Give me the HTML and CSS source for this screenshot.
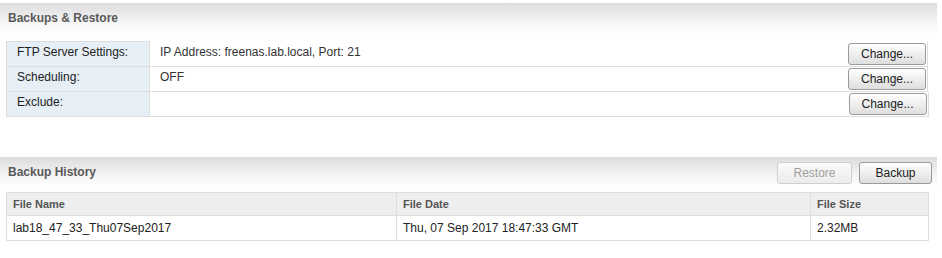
FILE: index.html
```html
<!DOCTYPE html>
<html lang="en">
<head>
    <meta charset="UTF-8">
    <title>Backups & Restore</title>
    <link rel="stylesheet" href="styles.css">
</head>
<body>
    <div class="section">
        <div class="section-header">
            <span class="section-title">Backups &amp; Restore</span>
        </div>
        <table class="settings">
            <tr>
                <td class="label">FTP Server Settings:</td>
                <td class="value"><span>IP Address: freenas.lab.local, Port: 21</span><button type="button" class="btn">Change...</button></td>
            </tr>
            <tr>
                <td class="label">Scheduling:</td>
                <td class="value"><span>OFF</span><button type="button" class="btn">Change...</button></td>
            </tr>
            <tr>
                <td class="label">Exclude:</td>
                <td class="value"><span></span><button type="button" class="btn">Change...</button></td>
            </tr>
        </table>
    </div>
    <div class="section history">
        <div class="section-header">
            <span class="section-title">Backup History</span>
            <div class="actions">
                <button type="button" class="btn" disabled>Restore</button>
                <button type="button" class="btn">Backup</button>
            </div>
        </div>
        <table class="grid">
            <tr>
                <th class="col-name">File Name</th>
                <th class="col-date">File Date</th>
                <th>File Size</th>
            </tr>
            <tr>
                <td>lab18_47_33_Thu07Sep2017</td>
                <td>Thu, 07 Sep 2017 18:47:33 GMT</td>
                <td>2.32MB</td>
            </tr>
        </table>
    </div>
</body>
</html>
```

FILE: styles.css
```css
body {
    margin: 0;
    font-family: "Liberation Sans", Arial, sans-serif;
    font-size: 12px;
    color: #222;
    background-color: #ffffff;
}
.section {
    padding-top: 3px;
}
.section.history {
    padding-top: 40px;
}
.section-header {
    display: flex;
    justify-content: space-between;
    align-items: center;
    width: 937px;
    height: 30px;
    box-sizing: border-box;
    padding: 0 5px 0 8px;
    background: linear-gradient(#dcdcdc, #f4f4f4 60%, #ffffff);
}
.section-title {
    font-size: 12px;
    font-weight: bold;
    color: #5a5a5a;
}
.actions {
    display: flex;
    gap: 7px;
    margin-top: 1px;
}
.btn {
    font-family: "Liberation Sans", Arial, sans-serif;
    font-size: 12px;
    color: #222;
    height: 22px;
    padding: 0 10px;
    border: 1px solid #9a9a9a;
    border-radius: 3px;
    background: linear-gradient(#ffffff, #dedede);
}
.btn:disabled {
    color: #a0a0a0;
    border-color: #cfcfcf;
    background: linear-gradient(#fafafa, #ececec);
}
.actions .btn {
    width: 73px;
    height: 22px;
}
.actions .btn:disabled {
    width: 75px;
}
table {
    border-collapse: collapse;
    margin-left: 6px;
    width: 923px;
}
.settings {
    margin-top: 8px;
}
.settings td {
    height: 24px;
    padding: 0;
    border: 1px solid #dddddd;
}
.settings td.label {
    width: 132px;
    padding-left: 10px;
    background-color: #e6eef6;
    vertical-align: top;
    padding-top: 3px;
    height: 21px;
}
.value {
    display: flex;
    justify-content: space-between;
    align-items: center;
    box-sizing: border-box;
    padding: 0 1px 0 10px !important;
    border: none !important;
    border-bottom: 1px solid #dddddd !important;
    border-right: 1px solid #dddddd !important;
    height: 25px !important;
}
.value span {
    color: #333;
    align-self: flex-start;
    padding-top: 3px;
}
.value .btn {
    width: 78px;
}
.grid {
    margin-top: 5px;
}
.grid th, .grid td {
    border: 1px solid #dddddd;
    text-align: left;
    padding: 0 0 0 6px;
}
.grid th {
    height: 22px;
    background-color: #eeeeee;
    font-size: 11px;
    font-weight: bold;
    color: #555;
}
.grid td {
    height: 24px;
    color: #222;
}
.col-name {
    width: 383px;
}
.col-date {
    width: 407px;
}
```
